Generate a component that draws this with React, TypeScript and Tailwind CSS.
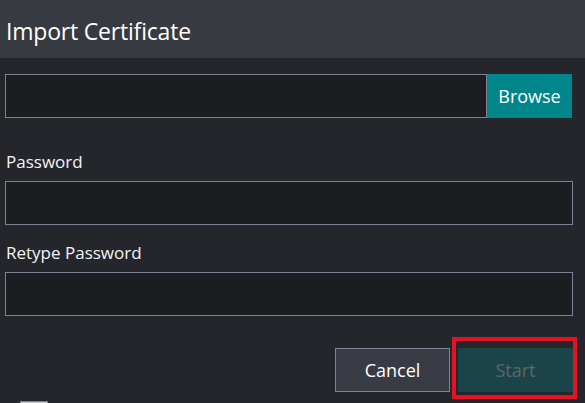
const font = { fontFamily: '"Open Sans", "Noto Sans", sans-serif' };

function Field({ label }: { label: string }) {
    return (
        <div className="flex flex-col">
            <label className="text-[17px] leading-[24px] text-[#f4f4f4] h-[24px] mb-[7px] pl-[1px]">{label}</label>
            <div className="w-[568px] h-[44px] bg-[#1c1d21] border border-[#7d8394]" />
        </div>
    );
}

export default function App() {
    return (
        <div className="relative w-[585px] h-[403px] overflow-hidden bg-[#25262b]" style={font}>
            <div className="h-[58px] bg-[#383a42] flex items-center pl-[6px]">
                <h1 className="text-[23px] text-white tracking-[-0.2px] mt-[4px]">Import Certificate</h1>
            </div>

            <div className="flex flex-col pl-[5px] pt-[16px]">
                <div className="flex h-[44px]">
                    <div className="w-[482px] h-full bg-[#1c1d21] border border-[#7d8394]" />
                    <button className="w-[85px] h-full bg-[#00858a] text-white text-[18px]">Browse</button>
                </div>

                <div className="mt-[32px] flex flex-col gap-[16px]">
                    <Field label="Password" />
                    <Field label="Retype Password" />
                </div>

                <div className="flex justify-end gap-[8px] mt-[32px] pr-[12px]">
                    <button className="w-[115px] h-[44px] bg-[#393b44] border border-[#7d8394] text-white text-[18px]">Cancel</button>
                    <button className="w-[115px] h-[44px] bg-[#1a4449] text-[#5c6768] text-[18px]" disabled>Start</button>
                </div>
            </div>

            {/* highlight around the start action */}
            <div className="absolute left-[452px] top-[337px] w-[125px] h-[62px] border-[4px] border-[#e81123]" />

            {/* remember checkbox peeking at the bottom edge */}
            <div className="absolute left-[20px] top-[401px] w-[28px] h-[28px] bg-[#c9ccd1] border border-[#7d8394]" />
        </div>
    );
}
